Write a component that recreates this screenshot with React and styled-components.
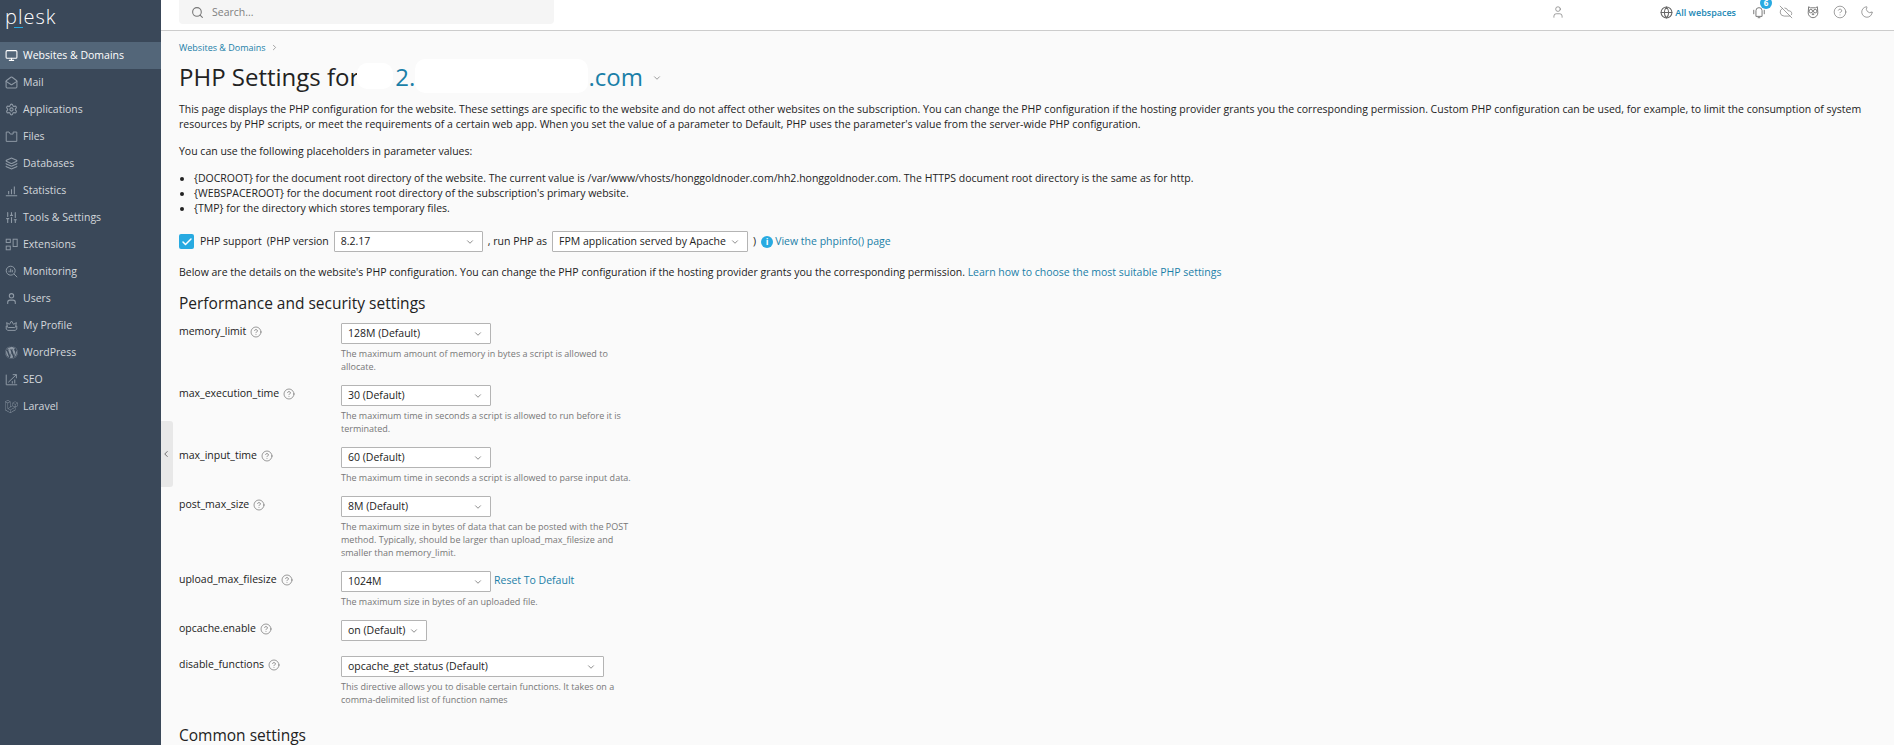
import React from 'react';
import styled, {createGlobalStyle} from 'styled-components';
import {
    Monitor, MailOpen, Settings, Layers, SlidersVertical, User, Search, ChevronDown, ChevronRight,
    ChevronLeft, CircleHelp, Check, Globe, CloudOff, Moon,
} from 'lucide-react';
import {FaWordpress} from 'react-icons/fa';
import {SiLaravel} from 'react-icons/si';

const GlobalStyle = createGlobalStyle`
    html, body {
        margin: 0;
        height: 100%;
        overflow: hidden;
        background: #fafafa;
    }
    body {
        font-family: "Open Sans", "Liberation Sans", sans-serif;
        font-size: 10.5px;
        line-height: 15px;
        color: #222;
    }
`;

const Page = styled.div`
    display: flex;
    width: 1894px;
    height: 745px;
    overflow: hidden;
`;

const Sidebar = styled.nav`
    width: 161px;
    flex-shrink: 0;
    background: #3a4859;
`;

const Logo = styled.div`
    position: relative;
    height: 42px;
    padding-left: 5px;
    font-size: 20px;
    font-weight: 300;
    line-height: 33px;
    letter-spacing: 1px;
    color: #fff;
    &::after {
        content: '';
        position: absolute;
        left: 14px;
        top: 27px;
        width: 9px;
        height: 1px;
        background: #28aae1;
    }
`;

const NavItem = styled.div`
    display: flex;
    align-items: center;
    gap: 5px;
    height: 27px;
    padding-left: 5px;
    color: ${p => (p.$active ? '#fff' : '#d3d7db')};
    background: ${p => (p.$active ? '#536679' : 'transparent')};
    svg {
        width: 13px;
        height: 13px;
        flex-shrink: 0;
        color: ${p => (p.$active ? '#fff' : '#8f9aa6')};
    }
`;

const Main = styled.div`
    position: relative;
    flex: 1;
    min-width: 0;
`;

const TopBar = styled.header`
    display: flex;
    align-items: flex-start;
    height: 30px;
    padding: 0 20px 0 18px;
    background: #fff;
    border-bottom: 1px solid #ccc;
`;

const SearchBox = styled.div`
    display: flex;
    align-items: center;
    gap: 8px;
    width: 375px;
    height: 24px;
    padding-left: 12px;
    box-sizing: border-box;
    background: #f5f5f5;
    border-radius: 0 0 4px 4px;
    color: #808080;
    svg {
        width: 13px;
        height: 13px;
        color: #777;
    }
`;

const TopActions = styled.div`
    display: flex;
    align-items: center;
    gap: 13px;
    height: 24px;
    margin-left: auto;
    color: #777;
    > svg, > span > svg {
        width: 14px;
        height: 14px;
    }
`;

const WebspaceLink = styled.a`
    display: flex;
    align-items: center;
    gap: 2px;
    margin: 0 3px 0 82px;
    font-size: 9px;
    font-weight: 600;
    color: #1a87b5;
    svg {
        width: 13px;
        height: 13px;
        color: #666;
    }
`;

const BellWrap = styled.span`
    position: relative;
    display: flex;
`;

const Badge = styled.span`
    position: absolute;
    left: 8px;
    top: -8px;
    width: 12px;
    height: 12px;
    border-radius: 50%;
    background: #28aae1;
    color: #fff;
    font-size: 8px;
    font-weight: 700;
    line-height: 12px;
    text-align: center;
`;

const Content = styled.main`
    padding: 9px 14px 0 18px;
`;

const Breadcrumb = styled.div`
    display: flex;
    align-items: center;
    gap: 4px;
    font-size: 9px;
    color: #1a7fa8;
    svg {
        width: 9px;
        height: 9px;
        color: #888;
    }
`;

const Title = styled.h1`
    display: flex;
    align-items: center;
    height: 32px;
    margin: 5px 0 0;
    font-size: 24px;
    font-weight: 400;
    color: #222;
    white-space: nowrap;
`;

const TitleLink = styled.span`
    color: #1a7fa8;
`;

const Redaction = styled.span`
    width: ${p => p.$w}px;
    height: ${p => p.$h}px;
    margin: 0 ${p => p.$right || 0}px 0 ${p => p.$left || 0}px;
    flex-shrink: 0;
    background: #fff;
    border-radius: 10px;
`;

const TitleCaret = styled(ChevronDown)`
    width: 10px;
    height: 10px;
    margin: 3px 0 0 9px;
    color: #888;
`;

const Text = styled.p`
    margin: ${p => p.$top}px 0 0;
`;

const Bullets = styled.ul`
    margin: 12px 0 0;
    padding-left: 15px;
`;

const SupportRow = styled.div`
    display: flex;
    align-items: center;
    height: 21px;
    margin-top: 15px;
`;

const CheckBox = styled.span`
    display: flex;
    align-items: center;
    justify-content: center;
    width: 15px;
    height: 15px;
    margin-right: 6px;
    border-radius: 2px;
    background: #28aae1;
    color: #fff;
    svg {
        width: 12px;
        height: 12px;
    }
`;

const Gap = styled.span`
    margin: 0 ${p => p.$right}px 0 ${p => p.$left}px;
`;

const SelectBox = styled.div`
    display: flex;
    align-items: center;
    justify-content: space-between;
    width: ${p => p.$w}px;
    height: 21px;
    padding: 0 7px 0 6px;
    box-sizing: border-box;
    flex-shrink: 0;
    background: #fff;
    border: 1px solid #b4b4b4;
    border-radius: 1px;
    color: #222;
    white-space: nowrap;
    svg {
        width: 10px;
        height: 10px;
        flex-shrink: 0;
        color: #777;
    }
`;

const InfoDot = styled.span`
    width: 12px;
    height: 12px;
    margin-right: 2px;
    border-radius: 50%;
    background: #28aae1;
    color: #fff;
    font-size: 9px;
    font-weight: 700;
    line-height: 12px;
    text-align: center;
`;

const Link = styled.a`
    color: #1a7fa8;
`;

const SectionTitle = styled.h2`
    margin: ${p => p.$top}px 0 10px;
    font-size: 15.500px;
    font-weight: 400;
    line-height: 20px;
    color: #222;
`;

const SettingRow = styled.div`
    display: grid;
    grid-template-columns: 162px 292px;
    padding-bottom: 12px;
`;

const SettingLabel = styled.div`
    display: flex;
    align-items: center;
    gap: 4px;
    height: 17px;
    svg {
        width: 12px;
        height: 12px;
        color: #666;
    }
`;

const ControlLine = styled.div`
    display: flex;
    align-items: center;
    gap: 3px;
    margin-bottom: 3px;
`;

const ResetLink = styled(Link)`
    margin-bottom: 3px;
`;

const Hint = styled.div`
    font-size: 9px;
    line-height: 13px;
    color: #777;
`;

const CollapseHandle = styled.div`
    position: absolute;
    left: 0;
    top: 421px;
    display: flex;
    align-items: center;
    width: 12px;
    height: 66px;
    background: #e8e8e8;
    border-radius: 0 3px 3px 0;
    color: #555;
    svg {
        width: 10px;
        height: 10px;
    }
`;

const Bell = () => (
    <svg viewBox="0 0 16 16" fill="none" stroke="currentColor" strokeWidth="1.1">
        <path d="M4.5 13V6.5a3.5 3.5 0 0 1 7 0V13z"/>
        <path d="M2 5.5v5M14 5.5v5M6.5 14.5h3"/>
    </svg>
);

const Owl = () => (
    <svg viewBox="0 0 16 16" fill="none" stroke="currentColor" strokeWidth="1.1">
        <path d="M3 2l2 1.2h6L13 2l.5 7c0 3-2.5 5.5-5.500 5.500S2.500 12 2.500 9z"/>
        <circle cx="5.500" cy="7" r="2"/>
        <circle cx="10.500" cy="7" r="2"/>
        <path d="M8 9.500l-1 1.500h2z"/>
    </svg>
);

const FolderTab = () => (
    <svg viewBox="0 0 16 16" fill="none" stroke="currentColor" strokeWidth="1.2">
        <path d="M1.500 2.500v11.500h13V2.500h-4.500v2.500H6.500L5 2.500z"/>
    </svg>
);

const Bars = () => (
    <svg viewBox="0 0 16 16" fill="none" stroke="currentColor" strokeWidth="1.3">
        <path d="M1 14.500h14M4.500 12.500v-4M8 12.500v-6M11.500 12.500V3"/>
    </svg>
);

const Blocks = () => (
    <svg viewBox="0 0 16 16" fill="none" stroke="currentColor" strokeWidth="1.2">
        <rect x="1.500" y="1.500" width="5" height="4"/>
        <rect x="1.500" y="10" width="5" height="4.500"/>
        <rect x="10" y="1.500" width="5" height="9"/>
    </svg>
);

const Monitoring = () => (
    <svg viewBox="0 0 16 16" fill="none" stroke="currentColor" strokeWidth="1.2">
        <circle cx="7" cy="7" r="5.500"/>
        <path d="M11 11l4 4M5 9V7M7 9V4.500M9 9V6"/>
    </svg>
);

const Crown = () => (
    <svg viewBox="0 0 16 16" fill="none" stroke="currentColor" strokeWidth="1.2">
        <path d="M3 9.500L2 4.500l3.500 2L8 2.500l2.500 4 3.500-2-1 5"/>
        <path d="M1.500 8.500v4l2 1.500h9l2-1.500v-4L12 10.500H4z"/>
    </svg>
);

const Growth = () => (
    <svg viewBox="0 0 16 16" fill="none" stroke="currentColor" strokeWidth="1.2">
        <path d="M1.500 2v12.500H15M4 11.500L14 2M9.500 2H14v4.500M9 13v-3M12 13V8"/>
    </svg>
);

const navItems = [
    ['Websites & Domains', Monitor, true],
    ['Mail', MailOpen],
    ['Applications', Settings],
    ['Files', FolderTab],
    ['Databases', Layers],
    ['Statistics', Bars],
    ['Tools & Settings', SlidersVertical],
    ['Extensions', Blocks],
    ['Monitoring', Monitoring],
    ['Users', User],
    ['My Profile', Crown],
    ['WordPress', FaWordpress],
    ['SEO', Growth],
    ['Laravel', SiLaravel],
];

const performance = [
    {name: 'memory_limit', value: '128M (Default)', hint: 'The maximum amount of memory in bytes a script is allowed to allocate.'},
    {name: 'max_execution_time', value: '30 (Default)', hint: 'The maximum time in seconds a script is allowed to run before it is terminated.'},
    {name: 'max_input_time', value: '60 (Default)', hint: 'The maximum time in seconds a script is allowed to parse input data.'},
    {name: 'post_max_size', value: '8M (Default)', hint: 'The maximum size in bytes of data that can be posted with the POST method. Typically, should be larger than upload_max_filesize and smaller than memory_limit.'},
    {name: 'upload_max_filesize', value: '1024M', hint: 'The maximum size in bytes of an uploaded file.', reset: true},
    {name: 'opcache.enable', value: 'on (Default)', width: 86},
    {name: 'disable_functions', value: 'opcache_get_status (Default)', width: 263, hint: 'This directive allows you to disable certain functions. It takes on a comma-delimited list of function names'},
];

const Select = ({width, children}) => (
    <SelectBox $w={width}>
        {children}
        <ChevronDown/>
    </SelectBox>
);

export default function App() {
    return (
        <Page>
            <GlobalStyle/>
            <Sidebar>
                <Logo>plesk</Logo>
                {navItems.map(([label, Icon, active]) => (
                    <NavItem key={label} $active={active}>
                        <Icon/>
                        {label}
                    </NavItem>
                ))}
            </Sidebar>
            <Main>
                <CollapseHandle><ChevronLeft/></CollapseHandle>
                <TopBar>
                    <SearchBox><Search/>Search...</SearchBox>
                    <TopActions>
                        <User strokeWidth={1.2}/>
                        <WebspaceLink><Globe/>All webspaces</WebspaceLink>
                        <BellWrap><Bell/><Badge>6</Badge></BellWrap>
                        <CloudOff strokeWidth={1.2}/>
                        <Owl/>
                        <CircleHelp strokeWidth={1.2}/>
                        <Moon strokeWidth={1.2}/>
                    </TopActions>
                </TopBar>
                <Content>
                    <Breadcrumb>Websites &amp; Domains <ChevronRight/></Breadcrumb>
                    <Title>
                        PHP Settings for
                        <Redaction $w={36} $h={26} $left={-2} $right={2}/>
                        <TitleLink>2.</TitleLink>
                        <Redaction $w={173} $h={34}/>
                        <TitleLink>.com</TitleLink>
                        <TitleCaret/>
                    </Title>
                    <Text $top={10}>
                        This page displays the PHP configuration for the website. These settings are specific to the website and do not affect other websites on the subscription. You can change the PHP configuration if the hosting provider grants you the corresponding permission. Custom PHP configuration can be used, for example, to limit the consumption of system resources by PHP scripts, or meet the requirements of a certain web app. When you set the value of a parameter to Default, PHP uses the parameter's value from the server-wide PHP configuration.
                    </Text>
                    <Text $top={12}>You can use the following placeholders in parameter values:</Text>
                    <Bullets>
                        <li>{'{DOCROOT}'} for the document root directory of the website. The current value is /var/www/vhosts/honggoldnoder.com/hh2.honggoldnoder.com. The HTTPS document root directory is the same as for http.</li>
                        <li>{'{WEBSPACEROOT}'} for the document root directory of the subscription's primary website.</li>
                        <li>{'{TMP}'} for the directory which stores temporary files.</li>
                    </Bullets>
                    <SupportRow>
                        <CheckBox><Check strokeWidth={3}/></CheckBox>
                        PHP support
                        <Gap $left={5} $right={5}>(PHP version</Gap>
                        <Select width={149}>8.2.17</Select>
                        <Gap $left={5} $right={5}>, run PHP as</Gap>
                        <Select width={196}>FPM application served by Apache</Select>
                        <Gap $left={5} $right={5}>)</Gap>
                        <InfoDot>i</InfoDot>
                        <Link>View the phpinfo() page</Link>
                    </SupportRow>
                    <Text $top={13}>
                        Below are the details on the website's PHP configuration. You can change the PHP configuration if the hosting provider grants you the corresponding permission. <Link>Learn how to choose the most suitable PHP settings</Link>
                    </Text>
                    <SectionTitle $top={13}>Performance and security settings</SectionTitle>
                    {performance.map(item => (
                        <SettingRow key={item.name}>
                            <SettingLabel>{item.name} <CircleHelp strokeWidth={1.3}/></SettingLabel>
                            <div>
                                <ControlLine>
                                    <Select width={item.width || 150}>{item.value}</Select>
                                    {item.reset && <ResetLink>Reset To Default</ResetLink>}
                                </ControlLine>
                                {item.hint && <Hint>{item.hint}</Hint>}
                            </div>
                        </SettingRow>
                    ))}
                    <SectionTitle $top={7}>Common settings</SectionTitle>
                </Content>
            </Main>
        </Page>
    );
}
